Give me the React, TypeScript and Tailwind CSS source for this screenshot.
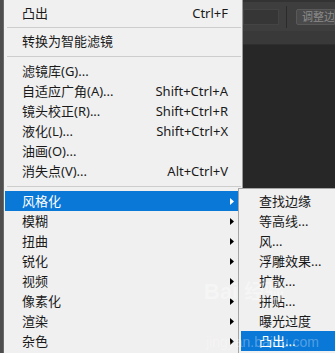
const font = "font-['Noto_Sans','Noto_Sans_CJK_SC',sans-serif]";

type Row =
  | { kind: "item"; label: string; shortcut?: string; sub?: boolean; active?: boolean }
  | { kind: "sep"; h: string };

const mainRows: Row[] = [
  { kind: "item", label: "凸出", shortcut: "Ctrl+F" },
  { kind: "sep", h: "h-[8px]" },
  { kind: "item", label: "转换为智能滤镜" },
  { kind: "sep", h: "h-[10px]" },
  { kind: "item", label: "滤镜库(G)..." },
  { kind: "item", label: "自适应广角(A)...", shortcut: "Shift+Ctrl+A" },
  { kind: "item", label: "镜头校正(R)...", shortcut: "Shift+Ctrl+R" },
  { kind: "item", label: "液化(L)...", shortcut: "Shift+Ctrl+X" },
  { kind: "item", label: "油画(O)..." },
  { kind: "item", label: "消失点(V)...", shortcut: "Alt+Ctrl+V" },
  { kind: "sep", h: "h-[10px]" },
  { kind: "item", label: "风格化", sub: true, active: true },
  { kind: "item", label: "模糊", sub: true },
  { kind: "item", label: "扭曲", sub: true },
  { kind: "item", label: "锐化", sub: true },
  { kind: "item", label: "视频", sub: true },
  { kind: "item", label: "像素化", sub: true },
  { kind: "item", label: "渲染", sub: true },
  { kind: "item", label: "杂色", sub: true },
];

const subItems = ["查找边缘", "等高线...", "风...", "浮雕效果...", "扩散...", "拼贴...", "曝光过度", "凸出..."];

function Arrow({ white }: { white?: boolean }) {
  return (
    <svg width="4" height="7" viewBox="0 0 4 7" className="absolute left-[225px] top-[7px]">
      <path d="M0 0 L4 3.5 L0 7 Z" fill={white ? "#ffffff" : "#000000"} />
    </svg>
  );
}

export default function App() {
  return (
    <div className={`relative w-[335px] h-[353px] overflow-hidden bg-[#282828] flex ${font}`}>
      <div className="w-[4px] shrink-0 bg-[#4e4e4e] border-r border-[#6a6a6a]" />

      {/* main filter menu */}
      <div className="w-[239px] shrink-0 bg-[#f0f0f0] border-r border-[#9a9a9a] pt-[3px] px-px flex flex-col">
        {mainRows.map((r, i) =>
          r.kind === "sep" ? (
            <div key={i} className={`${r.h} flex items-center pl-[2px]`}>
              <div className="h-px w-full bg-[#cdcdcd]" />
            </div>
          ) : (
            <div
              key={i}
              className={`relative h-[20px] flex items-center pr-[13px] text-[13px] leading-none ${
                r.active ? "bg-[#0a78d7] text-white" : "text-[#1a1a1a]"
              }`}
            >
              <span className="ml-[17px]">{r.label}</span>
              {r.shortcut && <span className="ml-auto">{r.shortcut}</span>}
              {r.sub && <Arrow white={r.active} />}
            </div>
          )
        )}
      </div>

      {/* photoshop workspace behind the menu */}
      <div className="flex-1 min-w-0 flex flex-col">
        <div className="h-[31px] bg-[#3e3e3e] border-t-[2px] border-[#333] flex items-center">
          <div className="w-[36px] shrink-0 h-[16px] bg-[#363636] border border-[#444]" />
          <div className="w-px shrink-0 h-[22px] bg-[#2b2b2b] ml-[7px]" />
          <div className="ml-[9px] h-[16px] flex-1 min-w-0 overflow-hidden bg-[#4a4a4a] border border-[#595959] rounded-l-[2px] text-[11px] text-[#8c8c8c] leading-none flex items-center pl-[5px] whitespace-nowrap">
            调整边缘
          </div>
        </div>
        <div className="h-[14px] bg-[#393939] border-b border-[#2e2e2e]" />
        <div className="flex-1 bg-[#272727]" />
      </div>

      {/* submenu */}
      <div className="absolute left-[238px] top-[188px] w-[100px] h-[170px] bg-[#f0f0f0] border-l border-t border-[#a5a5a5] pt-[2px]">
        {subItems.map((s, i) => (
          <div
            key={s}
            className={`h-[20px] flex items-center text-[13px] leading-none ${
              i === subItems.length - 1 ? "ml-[2px] bg-[#0a78d7] text-white" : "text-[#1a1a1a]"
            }`}
          >
            <span className={i === subItems.length - 1 ? "ml-[18px]" : "ml-[20px]"}>{s}</span>
          </div>
        ))}
      </div>

      {/* baidu jingyan watermark */}
      <div className="absolute left-[204px] top-[281px] flex items-center gap-[6px] text-[22px] font-bold leading-none text-white/35 pointer-events-none">
        <span className="font-['Liberation_Sans',sans-serif]">Bai</span>
        <span className="text-[20px]">经验</span>
      </div>
      <div className="absolute left-[206px] top-[335px] text-[14px] leading-none text-white/30 font-['Liberation_Sans',sans-serif] pointer-events-none">
        jingyan.baidu.com
      </div>
    </div>
  );
}
